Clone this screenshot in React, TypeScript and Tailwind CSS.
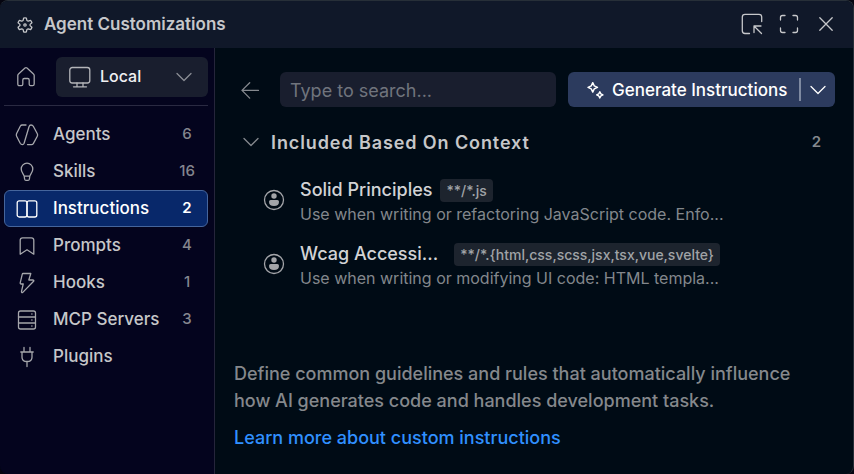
import type { ReactNode } from "react";

type IconProps = { children: ReactNode; size?: string; className?: string };

function Icon({ children, size = "size-6", className = "" }: IconProps) {
  return (
    <svg
      viewBox="0 0 24 24"
      fill="none"
      stroke="currentColor"
      strokeWidth="1.3"
      strokeLinecap="round"
      strokeLinejoin="round"
      aria-hidden="true"
      className={`shrink-0 ${size} ${className}`}
    >
      {children}
    </svg>
  );
}

const Chevron = ({ className = "" }: { className?: string }) => (
  <Icon size="size-6" className={className}>
    <path d="M5 8.5l7 7L19 8.5" />
  </Icon>
);

const GearIcon = () => (
  <Icon size="size-4">
    <g strokeWidth="1.9">
      <path d="M9.2 5.2L10 1.5Q12 1 14 1.5L14.8 5.2L16.8 6.3L20.4 5.1Q21.8 6.6 22.4 8.6L19.6 11.1V12.9L22.4 15.4Q21.8 17.4 20.4 18.9L16.8 17.7L14.8 18.8L14 22.5Q12 23 10 22.5L9.2 18.8L7.2 17.7L3.6 18.9Q2.2 17.4 1.6 15.4L4.4 12.9V11.1L1.6 8.6Q2.2 6.6 3.6 5.1L7.2 6.3Z" />
      <circle cx="12" cy="12" r="1.8" />
    </g>
  </Icon>
);

const items: { label: string; count?: number; icon: ReactNode }[] = [
  {
    label: "Agents",
    count: 6,
    icon: <path d="M11 2H7.2Q6 2 5.4 3L1.6 10.5Q1 12 1.6 13.2L5.2 20.2Q6 21.6 7.3 21.6Q8.6 21.6 9.1 20.2L14 3.8Q14.6 2 16 2Q17.6 2 18.3 3.3L22.3 10.7Q23 12 22.3 13.2L18.3 20.6Q17.7 21.6 16.5 21.6H12.5" />,
  },
  {
    label: "Skills",
    count: 16,
    icon: <path d="M9.2 16.2C8.8 13.8 6.2 12.5 6.2 9a5.8 5.8 0 0 1 11.6 0c0 3.5-2.6 4.8-3 7.2M9.2 16.2h5.6M9.2 16.2L9.6 19Q9.8 20.4 11 20.4h2Q14.2 20.4 14.4 19l.4-2.8" />,
  },
  {
    label: "Instructions",
    count: 2,
    icon: (
      <>
        <rect x="2.2" y="3.8" width="9.8" height="16.2" rx="2" />
        <rect x="12" y="3.8" width="9.8" height="16.2" rx="2" />
      </>
    ),
  },
  {
    label: "Prompts",
    count: 4,
    icon: <path d="M5.2 20.2V6.2Q5.2 3.8 7.6 3.8h8.8Q18.8 3.8 18.8 6.2v14L12 15.8Z" />,
  },
  {
    label: "Hooks",
    count: 1,
    icon: <path d="M8 2.5h7.8L13.8 9h4.4q1 .3.4 1.3L7.8 21.4q-1.5.6-1.3-1L8.2 13H6q-1-.2-.8-1.2L7.3 3.1Q7.5 2.5 8 2.5Z" />,
  },
  {
    label: "MCP Servers",
    count: 3,
    icon: (
      <>
        <rect x="3.5" y="3" width="17" height="18" rx="2" />
        <path d="M3.5 9h17M3.5 15h17M16.8 6h.2M16.8 12h.2M16.8 18h.2" />
      </>
    ),
  },
  {
    label: "Plugins",
    icon: <path d="M9 2.5V7M15 2.5V7M5.8 7h12.4M7 7v5.2q0 4.3 5 4.3t5-4.3V7M12 16.5v5" />,
  },
];

const instructions = [
  {
    title: "Solid Principles",
    glob: "**/*.js",
    text: "Use when writing or refactoring JavaScript code. Enfo...",
  },
  {
    title: "Wcag Accessi...",
    glob: "**/*.{html,css,scss,jsx,tsx,vue,svelte}",
    text: "Use when writing or modifying UI code: HTML templa...",
  },
];

function Sidebar() {
  return (
    <aside className="w-[215px] shrink-0 border-r border-[#25253b] bg-[#04041e] pt-[9px] pr-1.5 pl-1">
      <div className="flex items-center gap-2 border-b border-[#2a2a42] pb-2">
        <button type="button" aria-label="Home" className="flex h-10 w-11 items-center justify-center text-[#a5a6ab]">
          <Icon>
            <path d="M3.8 19V10.6Q3.8 9.6 4.5 9L11 3.1q1-.8 2 0L19.5 9q.7.6.7 1.6V19q0 1.6-1.6 1.6H16.5q-1.3 0-1.3-1.3V15q0-1.5-1.5-1.5h-3.4Q8.8 13.5 8.8 15v4.3q0 1.3-1.3 1.3H5.4Q3.8 20.6 3.8 19Z" />
          </Icon>
        </button>
        <div className="relative flex h-10 flex-1 items-center rounded-md bg-[#191e2e]">
          <Icon className="pointer-events-none absolute left-3 text-[#b4b5b9]">
            <rect x="1.8" y="2.5" width="20" height="15.5" rx="2.5" />
            <path d="M9 18v3.5M15 18v3.5M5.5 21.8h13" />
          </Icon>
          <select
            aria-label="Target"
            className="h-10 w-full appearance-none bg-transparent pb-0.5 pl-11 text-[16px] font-medium text-[#f0f0f2] outline-none"
          >
            <option>Local</option>
          </select>
          <Chevron className="pointer-events-none absolute right-3 text-[#8b8d95]" />
        </div>
      </div>
      <nav className="pt-[10px]">
        {items.map(({ label, count, icon }) => {
          const active = label === "Instructions";
          return (
            <button
              key={label}
              type="button"
              aria-current={active ? "page" : undefined}
              className={`flex h-[37px] w-full items-center rounded-md border pr-2 pl-[10px] text-left ${
                active ? "border-[#45659c] bg-[#08286a] text-white" : "border-transparent text-[#c6c7c9]"
              }`}
            >
              <Icon className={active ? "" : "text-[#a5a6ab]"}>{icon}</Icon>
              <span className="ml-3.5 flex-1 text-[17px] font-medium">{label}</span>
              <span className={`w-6 text-center text-[15px] ${active ? "font-semibold" : "font-medium text-[#85868e]"}`}>
                {count}
              </span>
            </button>
          );
        })}
      </nav>
    </aside>
  );
}

function InstructionRow({ title, glob, text }: (typeof instructions)[number]) {
  return (
    <li className="flex h-16 items-start gap-3.5 pl-7">
      <Icon className="mt-[18px] text-[#a3a5a9]">
        <circle cx="12" cy="12" r="9.5" />
        <circle cx="12" cy="8" r="2.7" fill="currentColor" stroke="none" />
        <path d="M7 13.7q0-1.7 1.7-1.7h6.6Q17 12 17 13.7q0 4.3-5 4.3t-5-4.3Z" fill="currentColor" stroke="none" />
      </Icon>
      <div className="w-[420px] min-w-0 pt-2">
        <div className="flex items-center gap-2">
          <span className={`whitespace-nowrap text-[18px] leading-6 font-medium text-[#d2d3d5] ${title.endsWith("...") ? "flex-1" : ""}`}>
            {title}
          </span>
          <span className="shrink-0 rounded bg-[#1d242e] px-1.5 text-[14px] leading-[23px] font-medium text-[#a0a3a7]">
            {glob}
          </span>
        </div>
        <p className="whitespace-nowrap text-[16px] leading-6 text-[#83878c]">{text}</p>
      </div>
    </li>
  );
}

export default function App() {
  return (
    <div className="min-h-screen bg-[#050510] font-['Inter',sans-serif]">
      <div className="flex min-h-screen flex-col overflow-hidden rounded-lg border-t border-r border-[#272f38] bg-[#000b15]">
        <header className="flex h-[47px] shrink-0 items-center bg-[#101829] pr-[15px] pl-[17px] text-[#c6c7ca]">
          <GearIcon />
          <h1 className="ml-[11px] flex-1 text-[17px] font-semibold">Agent Customizations</h1>
          <div className="flex items-center gap-[13px] pb-0.5">
            <button type="button" aria-label="Open in new window">
              <Icon>
                <path d="M9.5 21.5H5Q2.3 21.5 2.3 18.8V5Q2.3 2.3 5 2.3h14q2.7 0 2.7 2.7v4.5M21.5 21.5L14 14M14 20.5V14h7" />
              </Icon>
            </button>
            <button type="button" aria-label="Maximize">
              <Icon>
                <path d="M3.5 8V5.5Q3.5 3.5 5.5 3.5H8M16 3.5h2.5q2 0 2 2V8M20.5 16v2.5q0 2-2 2H16M8 20.5H5.5q-2 0-2-2V16" />
              </Icon>
            </button>
            <button type="button" aria-label="Close">
              <Icon>
                <path d="M5.8 5.8l12.4 12.4M18.2 5.8L5.8 18.2" />
              </Icon>
            </button>
          </div>
        </header>

        <div className="flex flex-1">
          <Sidebar />
          <main className="flex min-w-0 flex-1 flex-col pt-6 pr-[18px] pb-[23px] pl-[19px]">
            <div className="flex items-center gap-3">
              <button type="button" aria-label="Back" className="flex w-[34px] justify-center text-[#85898e]">
                <Icon>
                  <path d="M19.5 12.4H3M10.7 4.8L3 12.4l7.7 7.7" />
                </Icon>
              </button>
              <input
                type="text"
                aria-label="Search"
                placeholder="Type to search..."
                className="h-[35px] min-w-0 flex-1 rounded-md bg-[#191e2e] px-2.5 pt-0.5 text-[18px] text-white outline-none placeholder:text-[#70747d]"
              />
              <div className="flex h-[35px] w-[267px] items-center rounded-md bg-[#2c3b5e] text-white">
                <button
                  type="button"
                  className="flex flex-1 items-center gap-2 pt-0.5 pl-[18px] text-[17px] font-medium whitespace-nowrap"
                >
                  <Icon size="size-[18px]">
                    <g strokeWidth="1.9">
                      <path d="M9 0.9L11 5.2L15.3 7.2L11 9.2L9 13.5L7 9.2L2.7 7.2L7 5.2Z" />
                      <path d="M18.4 13L19.8 15.8L22.6 17.2L19.8 18.6L18.4 21.4L17 18.6L14.2 17.2L17 15.8Z" />
                    </g>
                  </Icon>
                  Generate Instructions
                </button>
                <span className="h-[23px] w-0.5 bg-[#7f8aa1]" />
                <button type="button" aria-label="More options" className="flex w-[34px] justify-center">
                  <Chevron />
                </button>
              </div>
            </div>

            <section className="mt-[23px] flex-1">
              <button type="button" className="flex h-6 w-full items-center pr-3.5 pl-[5px] text-left">
                <Chevron className="text-[#85898e]" />
                <span className="ml-2 flex-1 text-[18px] font-semibold tracking-wider text-[#c6c7c9]">Included Based On Context</span>
                <span className="text-[15px] font-semibold text-[#85898e]">2</span>
              </button>
              <ul className="mt-4">
                {instructions.map((item) => (
                  <InstructionRow key={item.title} {...item} />
                ))}
              </ul>
            </section>

            <footer className="pr-4 text-[18px] leading-[27px] font-medium">
              <p className="text-[#85888c]">
                Define common guidelines and rules that automatically influence how AI generates code and handles development tasks.
              </p>
              <a href="#learn" className="mt-2.5 inline-block text-[#3090ff]">
                Learn more about custom instructions
              </a>
            </footer>
          </main>
        </div>
      </div>
    </div>
  );
}
